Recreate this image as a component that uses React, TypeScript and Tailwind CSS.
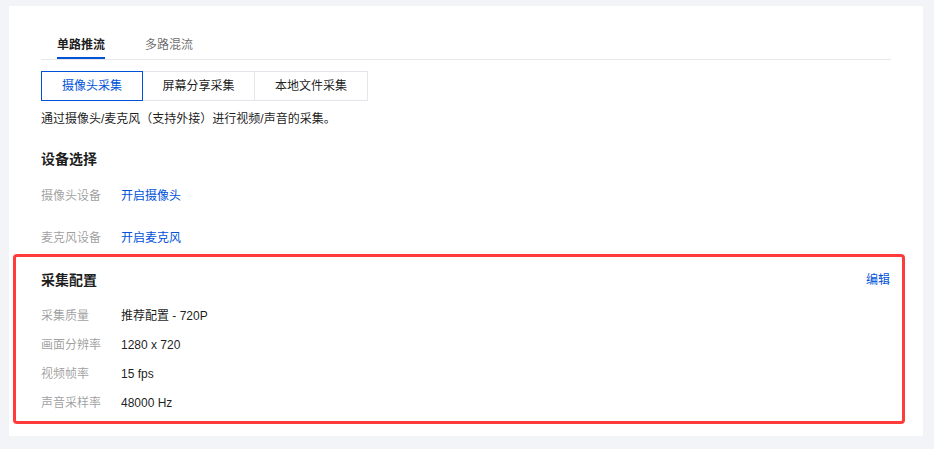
import { useState } from 'react';

const font = { fontFamily: '"Liberation Sans", "Noto Sans CJK SC", sans-serif' };

const sources = [
  { label: '摄像头采集', width: 'w-[102px]' },
  { label: '屏幕分享采集', width: 'w-[113px]' },
  { label: '本地文件采集', width: 'w-[114px]' },
];

const config = [
  ['采集质量', '推荐配置 - 720P'],
  ['画面分辨率', '1280 x 720'],
  ['视频帧率', '15 fps'],
  ['声音采样率', '48000 Hz'],
];

export default function App() {
  const [tab, setTab] = useState(0);
  const [source, setSource] = useState(0);

  return (
    <div className="min-h-screen bg-[#f3f4f7] pl-[9px] pt-[6px]" style={font}>
      <div className="w-[914px] h-[430px] bg-white px-[32px] pt-[24px]">
        {/* tabs */}
        <div className="flex h-[30px] border-b border-[#e7e7e7]">
          {['单路推流', '多路混流'].map((t, i) => (
            <button
              key={t}
              onClick={() => setTab(i)}
              className={`relative h-full flex items-center px-4 text-[12px] leading-5 ${i === 1 ? 'ml-2' : ''} ${
                tab === i ? 'text-black/90 font-bold' : 'text-black/60'
              }`}
            >
              {t}
              {tab === i && <span className="absolute left-4 right-4 bottom-0 h-[2px] bg-[#0052d9]" />}
            </button>
          ))}
        </div>

        {/* capture sources */}
        <div className="flex mt-[11px]">
          {sources.map((s, i) => (
            <button
              key={s.label}
              onClick={() => setSource(i)}
              className={`${s.width} h-[30px] text-[12px] ${i > 0 ? '-ml-px' : ''} border ${
                source === i ? 'relative z-10 border-[#0052d9] text-[#0052d9]' : 'border-[#e3e6eb] text-black/90'
              }`}
            >
              {s.label}
            </button>
          ))}
        </div>

        <p className="mt-[8px] text-[12px] leading-5 text-black/90">通过摄像头/麦克风（支持外接）进行视频/声音的采集。</p>

        <h3 className="mt-[19px] text-[14px] leading-[22px] font-bold text-black/90">设备选择</h3>

        <div className="mt-[16px] flex text-[12px] leading-5">
          <span className="w-[80px] text-black/40">摄像头设备</span>
          <a className="text-[#0052d9] cursor-pointer">开启摄像头</a>
        </div>
        <div className="mt-[22px] flex text-[12px] leading-5">
          <span className="w-[80px] text-black/40">麦克风设备</span>
          <a className="text-[#0052d9] cursor-pointer">开启麦克风</a>
        </div>

        {/* capture config */}
        <div className="mt-[6px] -ml-[28px] w-[892px] border-[3px] border-[#ff3b3b] rounded-[4px] pl-[25px] pr-[12px] pt-[12px] pb-[8px]">
          <div className="flex items-center justify-between">
            <h3 className="text-[14px] leading-[22px] font-bold text-black/90">采集配置</h3>
            <a className="text-[12px] leading-5 text-[#0052d9] cursor-pointer">编辑</a>
          </div>
          <div className="mt-[15px] flex flex-col gap-[9px]">
            {config.map(([k, v]) => (
              <div key={k} className="flex text-[12px] leading-5">
                <span className="w-[80px] text-black/40">{k}</span>
                <span className="text-black/90">{v}</span>
              </div>
            ))}
          </div>
        </div>
      </div>
    </div>
  );
}
